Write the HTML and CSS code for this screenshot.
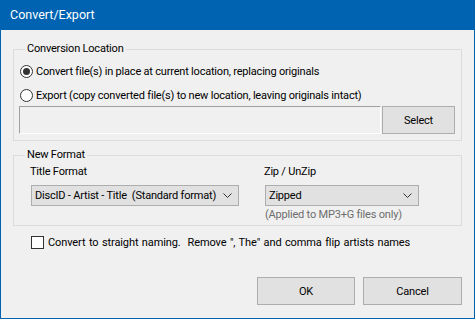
FILE: index.html
```html
<!DOCTYPE html>
<html>
<head>
<meta charset="utf-8">
<link rel="stylesheet" href="styles.css">
</head>
<body>
<div class="window">
  <div class="titlebar">Convert/Export</div>
  <div class="content">
    <fieldset class="group group-location">
      <legend>Conversion Location</legend>
      <label class="radio-row"><span class="radio checked"></span><span>Convert file(s) in place at current location, replacing originals</span></label>
      <label class="radio-row second"><span class="radio"></span><span>Export (copy converted file(s) to new location, leaving originals intact)</span></label>
      <div class="path-row">
        <div class="edit"></div>
        <div class="btn btn-select">Select</div>
      </div>
    </fieldset>
    <fieldset class="group group-format">
      <legend>New Format</legend>
      <div class="format-cols">
        <div class="col col-title">
          <div class="field-label">Title Format</div>
          <div class="combo combo-title"><span>DiscID - Artist - Title&nbsp; (Standard format)</span><svg class="chev" width="9" height="5" viewBox="0 0 9 5"><path d="M0.5 0.5 L4.5 4.5 L8.5 0.5" fill="none" stroke="#333" stroke-width="1"/></svg></div>
        </div>
        <div class="col col-zip">
          <div class="field-label">Zip / UnZip</div>
          <div class="combo combo-zip"><span>Zipped</span><svg class="chev" width="9" height="5" viewBox="0 0 9 5"><path d="M0.5 0.5 L4.5 4.5 L8.5 0.5" fill="none" stroke="#333" stroke-width="1"/></svg></div>
          <div class="hint">(Applied to MP3+G files only)</div>
        </div>
      </div>
    </fieldset>
    <label class="check-row"><span class="checkbox"></span><span class="check-text">Convert to straight naming.&nbsp; Remove ", The" and comma flip artists names</span></label>
    <div class="buttons">
      <div class="btn btn-ok">OK</div>
      <div class="btn btn-cancel">Cancel</div>
    </div>
  </div>
</div>
</body>
</html>
```
FILE: styles.css
```css
html, body {
  margin: 0;
  padding: 0;
  background: #f0f0f0;
}
body {
  font-family: Roboto, "Liberation Sans", Arial, sans-serif;
  font-size: 11px;
  letter-spacing: -0.2px;
  color: #000;
  white-space: nowrap;
}
.window {
  width: 475px;
  height: 319px;
  box-sizing: border-box;
  border: 1px solid #0063b1;
  border-top: none;
  background: #f0f0f0;
  display: flex;
  flex-direction: column;
}
.titlebar {
  height: 30px;
  margin: 0 -1px;
  background: #0063b1;
  color: #fff;
  font-size: 12.5px;
  letter-spacing: 0;
  line-height: 30px;
  padding-left: 10px;
}
.content {
  flex: 1;
  display: flex;
  flex-direction: column;
  padding: 12px 12px 13px 12px;
}
.group {
  margin: 0;
  padding: 0 6px 6px 6px;
  border: 1px solid #dcdcdc;
  min-width: 0;
}
.group legend {
  margin-left: 5px;
  padding: 0 2px;
  line-height: 14px;
}
.radio-row {
  display: flex;
  align-items: center;
  height: 16px;
  margin-top: 7px;
}
.radio-row.second {
  margin-top: 8px;
}
.radio {
  width: 13px;
  height: 13px;
  box-sizing: border-box;
  border: 1px solid #333;
  border-radius: 50%;
  background: #fff;
  margin-right: 3px;
  display: flex;
  align-items: center;
  justify-content: center;
}
.radio.checked::after {
  content: "";
  width: 7px;
  height: 7px;
  border-radius: 50%;
  background: #333;
}
.path-row {
  display: flex;
  gap: 1px;
  margin-top: 3px;
  margin-left: -1px;
}
.edit {
  width: 362px;
  height: 28px;
  box-sizing: border-box;
  border-top: 1px solid #a0a0a0;
  border-left: 1px solid #a0a0a0;
  border-right: 1px solid #fff;
  border-bottom: 1px solid #fff;
  background: #f0f0f0;
}
.btn {
  box-sizing: border-box;
  background: #e1e1e1;
  border: 1px solid #adadad;
  display: flex;
  align-items: center;
  justify-content: center;
}
.btn-select {
  width: 73px;
  height: 28px;
}
.group-format {
  margin-top: 7px;
  padding-bottom: 3px;
}
.format-cols {
  display: flex;
}
.field-label {
  line-height: 14px;
  margin-top: 3px;
}
.col-title {
  padding-left: 10px;
  width: 234px;
}
.combo {
  box-sizing: border-box;
  height: 21px;
  margin-top: 6px;
  margin-left: 1px;
  background: #e1e1e1;
  border: 1px solid #adadad;
  display: flex;
  align-items: center;
  justify-content: space-between;
  padding: 0 6px 0 3px;
}
.combo-title {
  width: 208px;
}
.combo-zip {
  width: 154px;
}
.chev {
  display: block;
}
.hint {
  color: #6d6d6d;
  line-height: 14px;
  margin-top: 2px;
  margin-left: 1px;
}
.check-row {
  display: flex;
  align-items: center;
  margin-top: 9px;
  margin-left: 18px;
  height: 15px;
}
.check-text {
  letter-spacing: -0.1px;
  word-spacing: 0.8px;
}
.checkbox {
  width: 13px;
  height: 13px;
  box-sizing: border-box;
  border: 1px solid #333;
  background: #fff;
  margin-right: 4px;
}
.buttons {
  margin-top: auto;
  display: flex;
  justify-content: flex-end;
  gap: 8px;
}
.btn-ok {
  width: 98px;
  height: 28px;
}
.btn-cancel {
  width: 99px;
  height: 28px;
}
```
